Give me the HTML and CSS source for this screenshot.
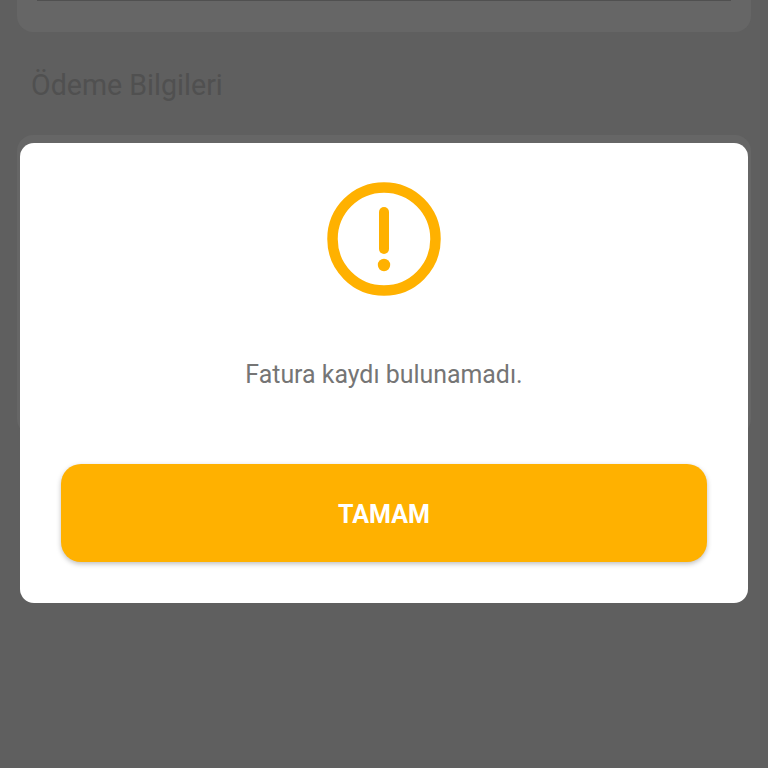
FILE: index.html
```html
<!DOCTYPE html>
<html lang="tr">
<head>
    <meta charset="UTF-8">
    <meta name="viewport" content="width=device-width, initial-scale=1.0">
    <title>Ödeme Bilgileri</title>
    <link rel="stylesheet" href="styles.css">
</head>
<body>
    <div class="page">
        <div class="card card-top">
            <div class="card-line"></div>
        </div>
        <h2 class="section-title">Ödeme Bilgileri</h2>
        <div class="card card-payment"></div>
    </div>

    <div class="overlay">
        <div class="dialog">
            <svg class="dialog-icon" width="114" height="114" viewBox="0 0 114 114" fill="none">
                <circle cx="57" cy="57" r="51.5" stroke="#ffb100" stroke-width="10.5"/>
                <line x1="57" y1="30" x2="57" y2="67" stroke="#ffb100" stroke-width="10" stroke-linecap="round"/>
                <circle cx="57" cy="83" r="6.2" fill="#ffb100"/>
            </svg>
            <p class="dialog-text">Fatura kaydı bulunamadı.</p>
            <button class="dialog-btn" type="button">TAMAM</button>
        </div>
    </div>
</body>
</html>
```

FILE: styles.css
```css
/* Global Styles */
html, body {
    height: 100%;
}

body {
    margin: 0;
    background-color: #5f5f5f;
    font-family: 'Roboto', sans-serif;
    overflow: hidden;
    position: relative;
}

/* Page behind the dialog */
.page {
    padding: 0 17px;
}

.card {
    background-color: #666;
    border-radius: 16px;
}

.card-top {
    height: 32px;
    padding: 0 20px;
    box-sizing: border-box;
    border-radius: 0 0 16px 16px;
}

.card-line {
    height: 1px;
    background-color: #505050;
}

.section-title {
    margin: 36px 0 0 14px;
    height: 67px;
    font-size: 28.6px;
    line-height: 34px;
    font-weight: 400;
    color: #505050;
}

.card-payment {
    height: 300px;
}

/* Dialog */
.overlay {
    position: absolute;
    top: 0;
    left: 0;
    width: 100%;
    height: 100%;
    box-sizing: border-box;
    padding: 143px 20px 0;
}

.dialog {
    background-color: #fff;
    border-radius: 14px;
    height: 460px;
    box-sizing: border-box;
    padding: 39px 41px 0;
    display: flex;
    flex-direction: column;
    align-items: center;
}

.dialog-icon {
    display: block;
}

.dialog-text {
    margin: 61px 0 0;
    font-size: 24.9px;
    line-height: 36px;
    color: #757575;
}

.dialog-btn {
    margin-top: 71px;
    padding: 2px 0 0;
    width: 100%;
    height: 98px;
    background-color: #ffb100;
    color: #fff;
    border: none;
    border-radius: 20px;
    font-family: inherit;
    font-size: 25px;
    font-weight: 700;
    box-shadow: 0 2px 5px rgba(0, 0, 0, 0.25);
}
```
